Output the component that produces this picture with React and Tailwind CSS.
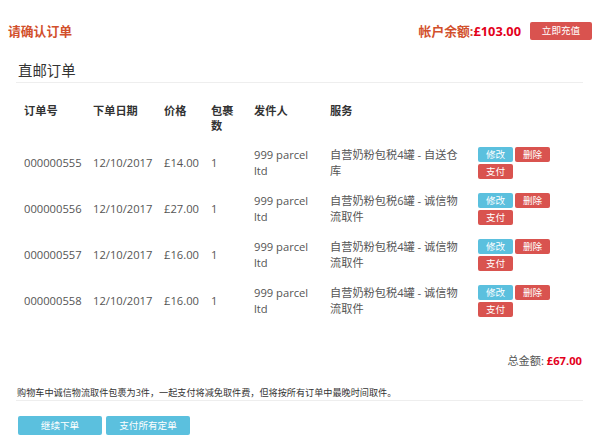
export default function App() {
  const rows = [
    { id: "000000555", price: "£14.00", service: "自营奶粉包税4罐 - 自送仓库" },
    { id: "000000556", price: "£27.00", service: "自营奶粉包税6罐 - 诚信物流取件" },
    { id: "000000557", price: "£16.00", service: "自营奶粉包税4罐 - 诚信物流取件" },
    { id: "000000558", price: "£16.00", service: "自营奶粉包税4罐 - 诚信物流取件" },
  ];
  const font = { fontFamily: '"Open Sans", "Noto Sans CJK SC", sans-serif' };
  const th = "text-left font-bold pl-[8px] pr-[6px] pt-[8px] pb-[7px] leading-[15px]";
  const td = "pl-[8px] pr-[6px] py-[7px]";
  return (
    <div className="w-[602px] h-[445px] bg-white text-[#555]" style={font}>
      <div className="flex items-center justify-between pl-[8px] pr-[10px] pt-[22px]">
        <div className="text-[12.8px] font-bold text-[#d2502c] leading-[18px]">请确认订单</div>
        <div className="flex items-center">
          <span className="text-[12.8px] font-bold text-[#d2502c] leading-[18px]">
            帐户余额:<span className="text-[#e3001b]">£103.00</span>
          </span>
          <button className="ml-[9px] w-[62px] h-[18px] rounded-[2px] bg-[#d9534f] text-white text-[9.6px] leading-[18px]">
            立即充值
          </button>
        </div>
      </div>

      <div className="mx-[16px] w-[567px]">
        <div className="mt-[21px] text-[14.4px] leading-[20px] text-[#333] pl-[2px] pb-[1px] border-b border-[#eee]">
          直邮订单
        </div>

        <table className="mt-[12px] w-[567px] table-fixed border-collapse text-[11.2px] leading-[16px]">
          <thead>
            <tr className="text-[#333] font-bold align-top">
              <th className={`w-[69px] ${th}`}>订单号</th>
              <th className={`w-[71px] ${th}`}>下单日期</th>
              <th className={`w-[47px] ${th}`}>价格</th>
              <th className={`w-[43px] ${th}`}>包裹数</th>
              <th className={`w-[76px] ${th}`}>发件人</th>
              <th className={`w-[148px] ${th}`}>服务</th>
              <th className={`w-[113px] ${th}`}></th>
            </tr>
          </thead>
          <tbody>
            {rows.map((r) => (
              <tr key={r.id} className="align-middle">
                <td className={td}>{r.id}</td>
                <td className={td}>12/10/2017</td>
                <td className={td}>{r.price}</td>
                <td className={td}>1</td>
                <td className={td}>999 parcel ltd</td>
                <td className={td}>{r.service}</td>
                <td className={td}>
                  <div className="flex flex-col gap-[2px]">
                    <div className="flex gap-[2px]">
                      <button className="w-[35px] h-[15px] rounded-[2px] bg-[#5bc0de] text-white text-[9.6px] leading-[15px]">修改</button>
                      <button className="w-[35px] h-[15px] rounded-[2px] bg-[#d9534f] text-white text-[9.6px] leading-[15px]">删除</button>
                    </div>
                    <button className="w-[35px] h-[15px] rounded-[2px] bg-[#d9534f] text-white text-[9.6px] leading-[15px]">支付</button>
                  </div>
                </td>
              </tr>
            ))}
          </tbody>
        </table>

        <div className="mt-[29px] text-right pr-[1px] text-[11.2px] leading-[16px] text-[#555]">
          总金额: <span className="font-bold text-[#e3001b]">£67.00</span>
        </div>

        <div className="mt-[17px] pl-[1px] pb-[1px] text-[9.15px] leading-[13px] text-[#333] border-b border-[#eee]">
          购物车中诚信物流取件包裹为3件，一起支付将减免取件费，但将按所有订单中最晚时间取件。
        </div>

        <div className="mt-[15px] flex gap-[4px] pl-[2px]">
          <button className="w-[84px] h-[19px] rounded-[2px] bg-[#5bc0de] text-white text-[9.6px] leading-[19px]">继续下单</button>
          <button className="w-[84px] h-[19px] rounded-[2px] bg-[#5bc0de] text-white text-[9.6px] leading-[19px]">支付所有定单</button>
        </div>
      </div>
    </div>
  );
}
